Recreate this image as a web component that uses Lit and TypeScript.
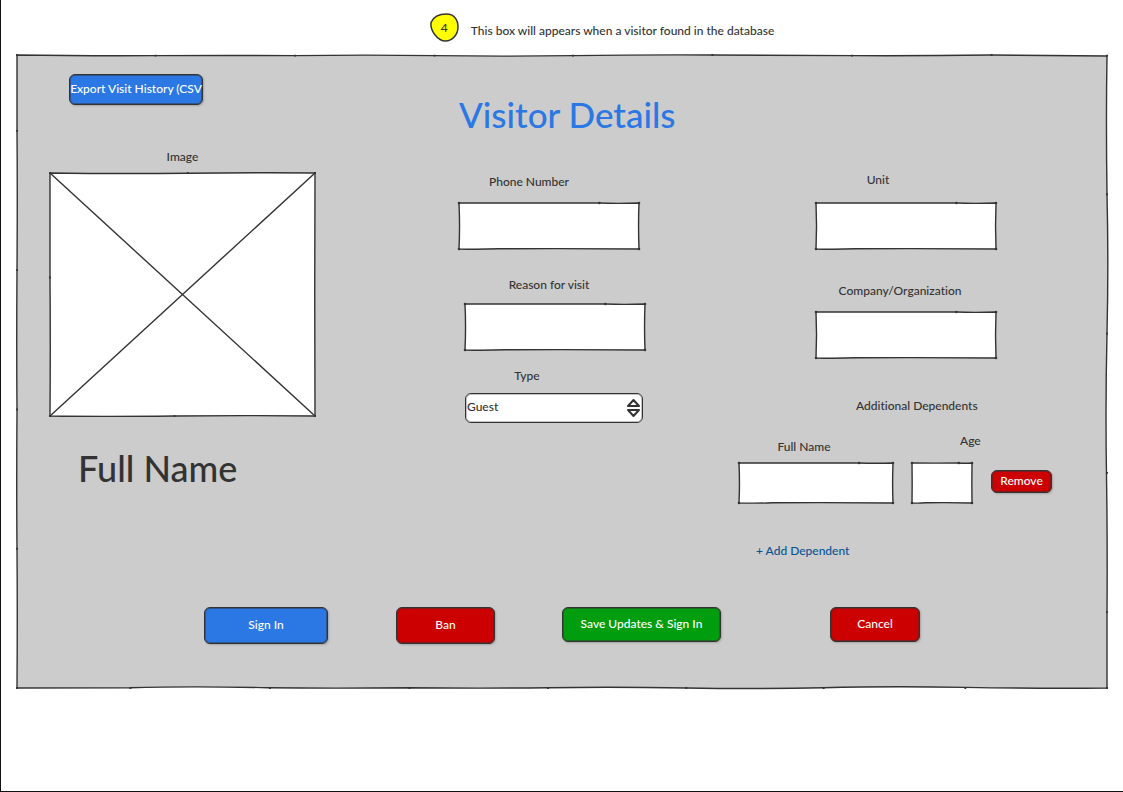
import { LitElement, html, css, svg } from "lit";
import { customElement, property } from "lit/decorators.js";

type Shape = "panel" | "box" | "image";

/* Hand-drawn outline that stretches to whatever box it is given. */
@customElement("sketch-frame")
export class SketchFrame extends LitElement {
  @property() shape: Shape = "box";

  static styles = css`
    :host {
      display: block;
      min-width: 0;
      min-height: 0;
      contain: size;
    }
    svg {
      display: block;
      width: 100%;
      height: 100%;
      overflow: visible;
    }
    path {
      vector-effect: non-scaling-stroke;
      stroke: #333;
      stroke-width: 1.4;
      fill: none;
    }
    .fill {
      fill: #fff;
    }
    .panel .fill {
      fill: #ccc;
    }
    .dot {
      stroke-width: 1.8;
      stroke-linecap: square;
    }
    .box .dot {
      stroke-width: 2.6;
      stroke-linecap: round;
    }
  `;

  private outline() {
    if (this.shape === "panel") {
      return svg`
        <path class="fill" d="M0 0 Q6 .15 12.7 .1 T25.5 .1 Q32 -.05 38.3 .1 T51 .1 T63.8 0 T76.6 .1 T89.4 0 L100 .15
          Q99.9 10 100 22 Q100.15 33 100 44 T99.95 66 T100 88 L100 100
          Q94 100.1 87 99.9 T74 99.95 T61.4 100 Q55 99.8 48.7 99.95 T36 99.95 Q29 100.1 23 99.95 Q16 99.7 10.4 99.95 L0 100
          Q.05 88 0 78 T0 56 Q-.05 46 0 34 T0 12 Z"></path>
        <path class="dot" d="M0 0h.01M12.7 .1h.01M25.5 .1h.01M38.3 .1h.01M51 .1h.01M63.8 0h.01M76.6 .1h.01M89.4 0h.01
          M100 .1h.01M100 22h.01M100 44h.01M100 66h.01M100 88h.01M100 100h.01M0 12h.01M0 34h.01M0 56h.01M0 78h.01M0 100h.01
          M10.4 100h.01M23.2 100h.01M36 100h.01M48.7 100h.01M61.4 100h.01M74 100h.01M87 100h.01"></path>`;
    }
    if (this.shape === "image") {
      return svg`
        <path class="fill" d="M0 0 Q25 .4 52 .1 T100 0 Q99.8 50 100 100 Q74 99.7 47 100 T0 100 Q.2 70 0 43 Z"></path>
        <path d="M0 0L100 100M100 0L0 100"></path>
        <path class="dot" d="M0 0h.01M52 0h.01M100 0h.01M100 100h.01M47 100h.01M0 100h.01M0 43h.01"></path>`;
    }
    return svg`
      <path class="fill" d="M0 0 Q40 .5 78 0 Q88 1.6 100 0 Q99.500 50 100 100 Q60 98.500 22 99.500 Q12 101 0 100 Q.6 50 0 0 Z"></path>
      <path class="dot" d="M0 0h.01M78 0h.01M100 0h.01M100 100h.01M0 100h.01"></path>`;
  }

  render() {
    return html`<svg class=${this.shape} viewBox="0 0 100 100" preserveAspectRatio="none" aria-hidden="true">
      ${this.outline()}
    </svg>`;
  }
}

@customElement("app-root")
export class AppRoot extends LitElement {
  static styles = css`
    :host {
      display: block;
      font-family: Lato, "Noto Sans", sans-serif;
      font-size: 12px;
      font-weight: 500;
      font-variant-ligatures: none;
      line-height: 16px;
      color: #333;
    }
    * {
      box-sizing: border-box;
    }
    .page {
      min-height: 100vh;
      padding: 13px 16px;
      background: #fff;
      border-left: 1px solid #111;
      border-bottom: 1px solid #111;
    }
    .note {
      display: flex;
      justify-content: center;
      align-items: center;
      gap: 12px;
      padding-left: 80px;
      margin: 0 0 13px;
    }
    .note-text {
      padding-top: 6px;
    }
    .badge {
      display: grid;
      place-items: center;
      width: 29px;
      height: 29px;
    }
    .badge > * {
      grid-area: 1 / 1;
    }
    .stack {
      display: grid;
    }
    .stack > * {
      grid-area: 1 / 1;
    }
    .columns {
      display: grid;
      grid-template-columns: 409fr 280fr 368fr;
      padding: 19px 0 0 33px;
    }
    .col {
      display: flex;
      flex-direction: column;
      align-items: flex-start;
      min-width: 0;
    }
    h1,
    h2 {
      margin: 0;
      font-size: 36px;
      line-height: 44px;
      font-weight: 500;
    }
    h1 {
      font-size: 35px;
      color: #2b78e4;
      margin: 18px 0 38px;
    }
    h2 {
      margin: 30px 0 0 28px;
    }
    button {
      height: 37px;
      padding: 0 0 1px;
      font: inherit;
      color: #fff;
      white-space: nowrap;
      border: 1px solid #333;
      border-radius: 6px;
      box-shadow:
        inset 0 0 0 1px rgba(51, 51, 51, 0.5),
        1px 1px 2px rgba(0, 0, 0, 0.2);
      cursor: pointer;
    }
    .blue {
      background: #2b78e4;
    }
    .red {
      background: #c00;
    }
    .green {
      background: #009e0f;
    }
    .export {
      width: 134px;
      height: 31px;
      margin-left: 19px;
    }
    .picture {
      width: 265px;
      gap: 8px;
      margin: 44px 0 0;
      display: grid;
      justify-items: center;
    }
    .picture sketch-frame {
      width: 100%;
      height: 243px;
    }
    .field {
      display: grid;
      gap: 13px;
      width: 180px;
      justify-items: center;
    }
    .field .stack {
      width: 100%;
      height: 46px;
    }
    .lean-less {
      padding-right: 12px;
    }
    .lean {
      padding-right: 40px;
    }
    .lean-more {
      padding-right: 56px;
    }
    .inset {
      margin-left: 6px;
    }
    .reason {
      margin-top: 28px;
      gap: 11px;
    }
    .type {
      margin-top: 18px;
      gap: 9px;
    }
    input {
      width: 100%;
      height: 100%;
      padding: 0 8px;
      border: 0;
      background: transparent;
      font: inherit;
      color: inherit;
      z-index: 1;
    }
    .field .pick {
      width: 178px;
      height: 30px;
      justify-self: start;
      align-items: center;
    }
    select {
      appearance: none;
      width: 100%;
      height: 100%;
      padding: 0 24px 2px 1px;
      font: inherit;
      color: inherit;
      background: #fff;
      border: 1px solid #333;
      border-radius: 6px;
      box-shadow: inset 0 0 0 1px rgba(51, 51, 51, 0.3);
    }
    .arrows {
      justify-self: end;
      margin-right: 2px;
      pointer-events: none;
    }
    .unit {
      margin: 98px 0 0 77px;
      gap: 15px;
    }
    .company {
      margin: 34px 0 0 77px;
    }
    fieldset {
      min-width: 0;
      margin: 40px 0 0;
      padding: 0;
      border: 0;
    }
    legend {
      padding: 0 0 0 117px;
    }
    .dependent {
      display: flex;
      align-items: flex-end;
      gap: 19px;
      margin-top: 19px;
    }
    .dependent .field {
      gap: 8px;
    }
    .dependent .stack {
      height: 40px;
    }
    .dependent .name {
      width: 154px;
    }
    .name label {
      padding-right: 24px;
    }
    .dependent .age {
      grid-template-columns: 60px;
      width: 60px;
      gap: 14px;
    }
    .age label {
      justify-self: start;
      padding-left: 48px;
    }
    .remove {
      width: 61px;
      height: 23px;
      margin-bottom: 10px;
    }
    a {
      color: #085394;
      text-decoration: none;
      margin: 40px 0 0 17px;
    }
    .actions {
      display: grid;
      grid-template-columns: 187fr 192fr 166fr 268fr 277fr;
      place-items: start;
      margin: 48px 0 44px;
    }
    .actions button:first-child {
      grid-column-start: 2;
    }
    .signin {
      width: 124px;
    }
    .ban {
      width: 99px;
    }
    .save {
      width: 159px;
      height: 35px;
    }
    .cancel {
      width: 90px;
      height: 35px;
    }
  `;

  private field(id: string, label: string, cls: string, labelCls = "") {
    return html`<div class="field ${cls}">
      <label class=${labelCls} for=${id}>${label}</label>
      <div class="stack"><sketch-frame></sketch-frame><input id=${id} type="text" /></div>
    </div>`;
  }

  render() {
    return html`<main class="page">
      <p class="note">
        <span class="badge">
          <svg width="29" height="29" viewBox="0 0 29 29" aria-hidden="true">
            <path
              d="M1 9.500C3.500 3.500 9.500 1 16.500 1C24 1 28 6.500 28 14C28 21.500 22.500 28 15.500 28C8 28 0 18 1 9.500Z"
              fill="#ff0"
              stroke="#333"
              stroke-width="1.500"
            ></path>
          </svg>
          <span>4</span>
        </span>
        <span class="note-text">This box will appears when a visitor found in the database</span>
      </p>

      <section class="stack">
        <sketch-frame shape="panel"></sketch-frame>
        <div>
          <div class="columns">
            <div class="col">
              <button class="blue export" type="button">Export Visit History (CSV</button>
              <figure class="picture">
                <figcaption>Image</figcaption>
                <sketch-frame shape="image"></sketch-frame>
              </figure>
              <h2>Full Name</h2>
            </div>

            <div class="col">
              <h1>Visitor Details</h1>
              ${this.field("phone", "Phone Number", "", "lean")}
              ${this.field("reason", "Reason for visit", "inset reason", "lean-less")}
              <div class="field inset type">
                <label class="lean-more" for="type">Type</label>
                <div class="stack pick">
                  <select id="type"><option>Guest</option></select>
                  <svg class="arrows" width="15" height="20" viewBox="0 0 15 20" aria-hidden="true">
                    <path
                      d="M7.500 2L13 8H2ZM2 12H13L7.500 18Z"
                      fill="none"
                      stroke="#333"
                      stroke-width="2"
                      stroke-linejoin="round"
                    ></path>
                  </svg>
                </div>
              </div>
            </div>

            <div class="col">
              ${this.field("unit", "Unit", "unit", "lean-more")}
              ${this.field("company", "Company/Organization", "company", "lean-less")}
              <fieldset>
                <legend>Additional Dependents</legend>
                <div class="dependent">
                  ${this.field("dep-name", "Full Name", "name")}
                  ${this.field("dep-age", "Age", "age")}
                  <button class="red remove" type="button">Remove</button>
                </div>
              </fieldset>
              <a href="#add">+ Add Dependent</a>
            </div>
          </div>

          <div class="actions">
            <button class="blue signin" type="button">Sign In</button>
            <button class="red ban" type="button">Ban</button>
            <button class="green save" type="button">Save Updates &amp; Sign In</button>
            <button class="red cancel" type="button">Cancel</button>
          </div>
        </div>
      </section>
    </main>`;
  }
}
